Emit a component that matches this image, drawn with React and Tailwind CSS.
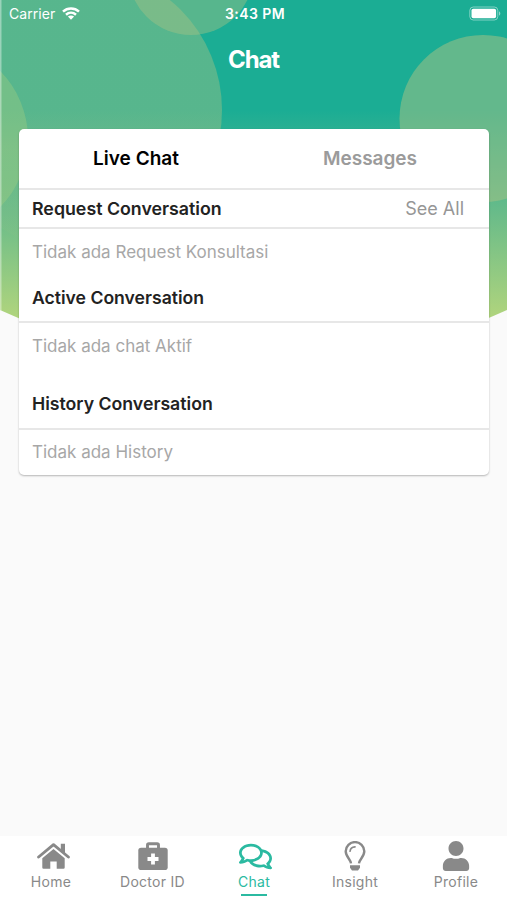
import React from "react";
import { FaRegComments, FaUser } from "react-icons/fa";

function HeaderArt() {
  return (
    <svg className="absolute inset-0 h-[360px] w-full" viewBox="0 0 507 360" aria-hidden="true">
      <defs>
        <linearGradient id="sky" gradientUnits="userSpaceOnUse" x1="0" y1="0" x2="0" y2="325">
          <stop offset="0" stopColor="#1bad94" />
          <stop offset="0.34" stopColor="#1bad94" />
          <stop offset="0.66" stopColor="#6abc89" />
          <stop offset="1" stopColor="#b5d67c" />
        </linearGradient>
        <linearGradient id="bubble" gradientUnits="userSpaceOnUse" x1="0" y1="150" x2="0" y2="240">
          <stop offset="0" stopColor="#a7c284" stopOpacity="0.43" />
          <stop offset="1" stopColor="#a7c284" stopOpacity="0.05" />
        </linearGradient>
        <clipPath id="banner">
          <path d="M0 0H507V310L475 324L253 420L32 324L0 310Z" />
        </clipPath>
      </defs>
      <g clipPath="url(#banner)">
        <path fill="url(#sky)" d="M0 0H507V360H0Z" />
        <circle cx="80" cy="110" r="142" fill="url(#bubble)" />
        <circle cx="191" cy="-28" r="63" fill="#a7c284" fillOpacity="0.43" />
        <circle cx="-69" cy="139" r="97" fill="#a7cf80" fillOpacity="0.36" />
        <circle cx="483" cy="118.500" r="83.500" fill="#a7c284" fillOpacity="0.52" />
        <path fill="#fff" fillOpacity="0.4" d="M0 0H1.500V320H0Z" />
      </g>
    </svg>
  );
}

function StatusBar() {
  return (
    <div className="relative flex h-[27px] items-center justify-between pl-[9px] pr-[6px] text-white">
      <div className="flex flex-1 items-center gap-[7px]">
        <span className="text-[14px] tracking-[0.05px]">Carrier</span>
        <svg width="18" height="13" viewBox="0 0 18 13" fill="none" stroke="currentColor" strokeWidth="2.500">
          <path d="M1 4.600C5.500 0.400 12.500 0.400 17 4.600" />
          <path d="M4 7.700C6.900 5.100 11.100 5.100 14 7.700" />
          <path d="M9 12.700L5.900 9.600C7.600 8 10.400 8 12.100 9.600Z" fill="currentColor" stroke="none" />
        </svg>
      </div>
      <span className="text-[14px] font-semibold tracking-[0.45px]">3:43 PM</span>
      <div className="flex flex-1 justify-end">
        <svg width="32" height="15" viewBox="0 0 32 15" fill="none">
          <rect x="0.800" y="1" width="28" height="13" rx="3.500" stroke="#fff" strokeOpacity="0.45" />
          <rect x="2.500" y="2.700" width="24.600" height="9.600" rx="1.800" fill="#fff" />
          <path d="M30 5.300C31.800 6 31.800 9 30 9.700Z" fill="#fff" fillOpacity="0.5" />
        </svg>
      </div>
    </div>
  );
}

function HomeIcon() {
  return (
    <svg className="relative left-[2px]" width="33" height="27" viewBox="0 0 33 27" fill="currentColor">
      <path d="M1.600 14L16.500 1.700L31.400 14" fill="none" stroke="currentColor" strokeWidth="2.900" strokeLinecap="round" strokeLinejoin="round" />
      <path d="M23.800 0.700H28V11L23.800 7.600Z" />
      <path d="M16.500 6L27.700 15.300V24.500Q27.700 25.700 26.500 25.700H19.700V18.500H13.300V25.700H6.500Q5.300 25.700 5.300 24.500V15.300Z" />
    </svg>
  );
}

function MedkitIcon() {
  return (
    <svg width="30" height="30" viewBox="0 0 30 30">
      <path d="M9.500 9V4.100Q9.500 2.700 10.900 2.700H19.100Q20.500 2.700 20.500 4.100V9" fill="none" stroke="currentColor" strokeWidth="2.900" />
      <rect x="0.300" y="6.800" width="29.400" height="22.200" rx="2.800" fill="currentColor" />
      <path d="M15 12.500V23.500M9.500 18H20.500" stroke="#fff" strokeWidth="3.800" />
    </svg>
  );
}

function BulbIcon() {
  return (
    <svg width="22" height="30" viewBox="0 0 22 30" fill="none" stroke="currentColor">
      <path d="M7 22.300C6.600 18.600 1.700 15.400 1.700 10.200A9.300 9.100 0 0 1 20.300 10.200C20.300 15.400 15.400 18.600 15 22.300" strokeWidth="2.400" />
      <path d="M6.100 10.200C6.300 7.600 8.100 5.900 11 5.800" strokeWidth="1.700" strokeLinecap="round" />
      <path d="M6 24.300H16V26.800L14 29.500H8L6 26.800Z" fill="currentColor" stroke="none" />
    </svg>
  );
}

function NavItem({ label, active, className, children }) {
  return (
    <div className={`flex flex-col items-center ${active ? "text-[#2bbaa1]" : "text-[#898989]"} ${className}`}>
      <div className="flex h-[32px] items-center">{children}</div>
      <span className="mt-[1px] whitespace-nowrap text-[14px] leading-[18px] tracking-[0.28px]">{label}</span>
      {active && <div className="mt-[3px] h-[2px] w-[26px] bg-[#2bbaa1]" />}
    </div>
  );
}

export default function App() {
  return (
    <div className="relative flex h-[900px] w-[507px] flex-col overflow-hidden bg-[#fafafa] font-[Inter,'Liberation_Sans',sans-serif]">
      <HeaderArt />
      <StatusBar />
      <h1 className="relative mt-[15px] text-center text-[24px] font-bold leading-[36px] tracking-[-1.100px] text-white">Chat</h1>

      <main className="relative ml-[19px] mr-[18px] mt-[51px] h-[346px] rounded-[5px] bg-white shadow-[0_1px_2px_rgba(0,0,0,0.28)]">
        <div className="grid h-[61px] grid-cols-2 items-center border-b-2 border-[#e7e7e7] pr-[2px] pt-[2px] text-center text-[19px] font-semibold">
          <span className="text-black">Live Chat</span>
          <span className="text-[#9b9b9b]">Messages</span>
        </div>
        <div className="flex h-[39px] items-center justify-between border-b-2 border-[#e7e7e7] pl-[13px] pr-[25px] pt-[1px]">
          <h2 className="text-[17.800px] font-semibold text-[#222]">Request Conversation</h2>
          <span className="pb-[2px] text-[18px] text-[#969696]">See All</span>
        </div>
        <p className="flex h-[46px] items-center pl-[13px] pt-[2px] text-[17px] text-[#a7a7a7]">Tidak ada Request Konsultasi</p>
        <h2 className="flex h-[48px] items-center border-b-2 border-[#e7e7e7] pl-[13px] text-[17.600px] font-semibold text-[#222]">Active Conversation</h2>
        <p className="flex h-[46px] items-center pl-[13px] pt-[2px] text-[17px] text-[#a7a7a7]">Tidak ada chat Aktif</p>
        <h2 className="mt-[10px] flex h-[51px] items-center border-b-2 border-[#e7e7e7] pl-[13px] pt-[2px] text-[17.700px] font-semibold text-[#222]">History Conversation</h2>
        <p className="flex h-[45px] items-center pl-[13px] pt-[1px] text-[17px] text-[#a7a7a7]">Tidak ada History</p>
      </main>

      <nav className="relative mt-auto flex h-[64px] bg-white pt-[4px]">
        <NavItem label="Home" className="w-[102px]"><HomeIcon /></NavItem>
        <NavItem label="Doctor ID" className="w-[101px]"><MedkitIcon /></NavItem>
        <NavItem label="Chat" active className="w-[102px]"><FaRegComments size={33} className="relative left-[1px]" /></NavItem>
        <NavItem label="Insight" className="w-[100px]"><BulbIcon /></NavItem>
        <NavItem label="Profile" className="w-[102px]"><FaUser size={30} /></NavItem>
      </nav>
    </div>
  );
}
